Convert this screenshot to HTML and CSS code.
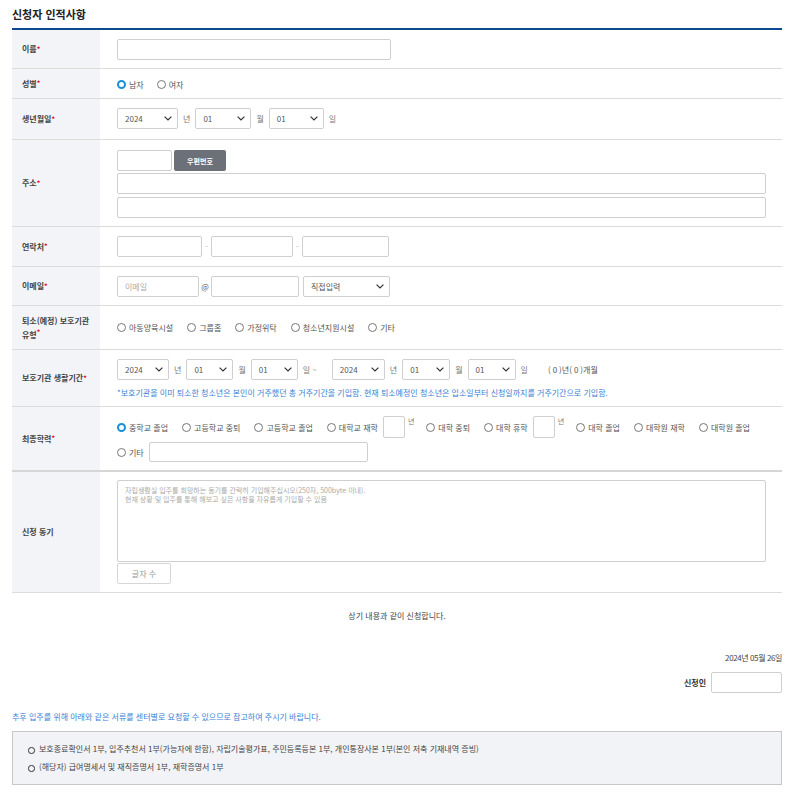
FILE: index.html
```html
<!DOCTYPE html>
<html lang="ko">
<head>
<meta charset="utf-8">
<title>신청자 인적사항</title>
<link rel="stylesheet" href="styles.css">
</head>
<body>
<div class="page">
  <h2 class="title">신청자 인적사항</h2>
  <div class="form">
    <div class="row">
      <div class="label">이름<i class="req">*</i></div>
      <div class="field p-name"><input class="input w274" type="text"></div>
    </div>
    <div class="row">
      <div class="label">성별<i class="req">*</i></div>
      <div class="field p-sex">
        <div class="line gap13">
          <label class="radio"><span class="dot on"></span>남자</label>
          <label class="radio"><span class="dot"></span>여자</label>
        </div>
      </div>
    </div>
    <div class="row">
      <div class="label">생년월일<i class="req">*</i></div>
      <div class="field p-birth">
        <div class="line gap5">
          <div class="select w61"><span>2024</span><svg width="8" height="5" viewBox="0 0 8 5"><path d="M0.6 0.6 L4 4 L7.4 0.6" fill="none" stroke="#333" stroke-width="1.2"/></svg></div>
          <span class="unit">년</span>
          <div class="select w56"><span>01</span><svg width="8" height="5" viewBox="0 0 8 5"><path d="M0.6 0.6 L4 4 L7.4 0.6" fill="none" stroke="#333" stroke-width="1.2"/></svg></div>
          <span class="unit">월</span>
          <div class="select w55"><span>01</span><svg width="8" height="5" viewBox="0 0 8 5"><path d="M0.6 0.6 L4 4 L7.4 0.6" fill="none" stroke="#333" stroke-width="1.2"/></svg></div>
          <span class="unit">일</span>
        </div>
      </div>
    </div>
    <div class="row">
      <div class="label">주소<i class="req">*</i></div>
      <div class="field p-addr">
        <div class="line gap2">
          <input class="input w54" type="text">
          <button class="zip" type="button">우편번호</button>
        </div>
        <input class="input full" type="text">
        <input class="input full" type="text">
      </div>
    </div>
    <div class="row">
      <div class="label">연락처<i class="req">*</i></div>
      <div class="field p-tel">
        <div class="line">
          <input class="input w85" type="text"><span class="dash">-</span>
          <input class="input w82" type="text"><span class="dash">-</span>
          <input class="input w87" type="text">
        </div>
      </div>
    </div>
    <div class="row">
      <div class="label">이메일<i class="req">*</i></div>
      <div class="field p-mail">
        <div class="line">
          <input class="input w82" type="text" placeholder="이메일"><span class="at">@</span>
          <input class="input w88" type="text">
          <div class="select w87 ml4"><span>직접입력</span><svg width="8" height="5" viewBox="0 0 8 5"><path d="M0.6 0.6 L4 4 L7.4 0.6" fill="none" stroke="#333" stroke-width="1.2"/></svg></div>
        </div>
      </div>
    </div>
    <div class="row">
      <div class="label two">퇴소(예정) 보호기관<br>유형<i class="req">*</i></div>
      <div class="field p-type">
        <div class="line gap14">
          <label class="radio"><span class="dot"></span>아동양육시설</label>
          <label class="radio"><span class="dot"></span>그룹홈</label>
          <label class="radio"><span class="dot"></span>가정위탁</label>
          <label class="radio"><span class="dot"></span>청소년지원시설</label>
          <label class="radio"><span class="dot"></span>기타</label>
        </div>
      </div>
    </div>
    <div class="row">
      <div class="label">보호기관 생활기간<i class="req">*</i></div>
      <div class="field p-period">
        <div class="line gap5">
          <div class="select w52"><span>2024</span><svg width="8" height="5" viewBox="0 0 8 5"><path d="M0.6 0.6 L4 4 L7.4 0.6" fill="none" stroke="#333" stroke-width="1.2"/></svg></div>
          <span class="unit">년</span>
          <div class="select w47"><span>01</span><svg width="8" height="5" viewBox="0 0 8 5"><path d="M0.6 0.6 L4 4 L7.4 0.6" fill="none" stroke="#333" stroke-width="1.2"/></svg></div>
          <span class="unit">월</span>
          <div class="select w47"><span>01</span><svg width="8" height="5" viewBox="0 0 8 5"><path d="M0.6 0.6 L4 4 L7.4 0.6" fill="none" stroke="#333" stroke-width="1.2"/></svg></div>
          <span class="unit">일 ~</span>
          <div class="select w53 ml10"><span>2024</span><svg width="8" height="5" viewBox="0 0 8 5"><path d="M0.6 0.6 L4 4 L7.4 0.6" fill="none" stroke="#333" stroke-width="1.2"/></svg></div>
          <span class="unit">년</span>
          <div class="select w48"><span>01</span><svg width="8" height="5" viewBox="0 0 8 5"><path d="M0.6 0.6 L4 4 L7.4 0.6" fill="none" stroke="#333" stroke-width="1.2"/></svg></div>
          <span class="unit">월</span>
          <div class="select w48"><span>01</span><svg width="8" height="5" viewBox="0 0 8 5"><path d="M0.6 0.6 L4 4 L7.4 0.6" fill="none" stroke="#333" stroke-width="1.2"/></svg></div>
          <span class="unit">일</span>
          <span class="calc">(<span class="num">0</span>)년(<span class="num">0</span>)개월</span>
        </div>
        <p class="note">*보호기관을 이미 퇴소한 청소년은 본인이 거주했던 총 거주기간을 기입함. 현재 퇴소예정인 청소년은 입소일부터 신청일까지를 거주기간으로 기입함.</p>
      </div>
    </div>
    <div class="row thick">
      <div class="label">최종학력<i class="req">*</i></div>
      <div class="field p-edu">
        <div class="line gap14">
          <label class="radio"><span class="dot on"></span>중학교 졸업</label>
          <label class="radio"><span class="dot"></span>고등학교 중퇴</label>
          <label class="radio"><span class="dot"></span>고등학교 졸업</label>
          <span class="grp"><label class="radio"><span class="dot"></span>대학교 재학</label><input class="input yr" type="text"><span class="sup">년</span></span>
          <label class="radio"><span class="dot"></span>대학 중퇴</label>
          <span class="grp"><label class="radio"><span class="dot"></span>대학 휴학</label><input class="input yr" type="text"><span class="sup">년</span></span>
          <label class="radio"><span class="dot"></span>대학 졸업</label>
          <label class="radio"><span class="dot"></span>대학원 재학</label>
          <label class="radio"><span class="dot"></span>대학원 졸업</label>
        </div>
        <div class="line gap5 mt4">
          <label class="radio"><span class="dot"></span>기타</label>
          <input class="input w219 h20" type="text">
        </div>
      </div>
    </div>
    <div class="row">
      <div class="label">신청 동기</div>
      <div class="field p-motive">
        <textarea class="textarea" placeholder="자립생활실 입주를 희망하는 동기를 간략히 기입해주십시오(250자, 500byte 이내).&#10;현재 상황 및 입주를 통해 해보고 싶은 사항을 자유롭게 기입할 수 있음"></textarea>
        <button class="count" type="button">글자 수</button>
      </div>
    </div>
  </div>

  <p class="confirm">상기 내용과 같이 신청합니다.</p>
  <p class="date">2024년 05월 26일</p>
  <div class="sign"><span class="sign-label">신청인</span><input class="input w71" type="text"></div>

  <p class="info">추후 입주를 위해 아래와 같은 서류를 센터별로 요청할 수 있으므로 참고하여 주시기 바랍니다.</p>
  <ul class="docs">
    <li>보호종료확인서 1부, 입주추천서 1부(가능자에 한함), 자립기술평가표, 주민등록등본 1부, 개인통장사본 1부(본인 저축 기재내역 증빙)</li>
    <li>(해당자) 급여명세서 및 재직증명서 1부, 재학증명서 1부</li>
  </ul>
</div>
</body>
</html>
```

FILE: styles.css
```css
* { box-sizing: border-box; }

body {
  margin: 0;
  background: #fff;
  color: #333;
  font-family: "Noto Sans CJK KR", "Noto Sans", sans-serif;
  font-size: 8px;
  line-height: 13px;
}

.page {
  width: 792px;
  padding: 0 10px 0 12px;
}

.title {
  margin: 0;
  height: 28px;
  line-height: 28px;
  font-size: 11px;
  font-weight: 700;
  color: #222;
}

.form {
  border-top: 2px solid #0c4a8e;
}

.row {
  display: flex;
  border-bottom: 1px solid #dcdcdc;
}

.row.thick {
  border-bottom: 2px solid #d6d6d6;
}

.label {
  width: 88px;
  flex: none;
  display: flex;
  align-items: center;
  padding: 0 8px 0 10px;
  background: #f3f4f8;
  font-size: 8px;
  font-weight: 700;
  color: #444;
  line-height: 14px;
}

.label.two {
  display: block;
  padding-top: 8px;
  padding-bottom: 7px;
}

.req {
  font-style: normal;
  color: #e3001b;
  font-size: 7px;
  line-height: 7px;
  vertical-align: 3px;
}

.field {
  flex: 1;
  display: flex;
  flex-direction: column;
  padding: 9px 16px 9px 17px;
  min-width: 0;
}

.p-name { padding-top: 9px; padding-bottom: 8px; }
.p-sex { padding-top: 9px; padding-bottom: 7px; justify-content: center; }
.p-birth { padding-top: 9px; padding-bottom: 10px; }
.p-addr { padding-top: 10px; padding-bottom: 8px; gap: 2px; }
.p-tel { padding-top: 9px; padding-bottom: 9px; }
.p-mail { padding-top: 9px; padding-bottom: 8px; }
.p-type { justify-content: center; }
.p-period { padding-top: 9px; padding-bottom: 7px; }
.p-edu { padding-top: 9px; padding-bottom: 8px; }
.p-motive { padding-top: 8px; padding-bottom: 8px; }

.line {
  display: flex;
  align-items: center;
}

.gap2 { gap: 2px; }
.gap5 { gap: 5px; }
.gap13 { gap: 13px; }
.gap14 { gap: 14px; }

.input {
  display: block;
  flex: none;
  height: 21px;
  margin: 0;
  padding: 0 7px;
  border: 1px solid #cfcfcf;
  border-radius: 2px;
  background: #fff;
  font-family: inherit;
  font-size: 8px;
  color: #555;
  outline: none;
}

.input::placeholder { color: #aaa; }

.p-addr .input:last-child { margin-top: 1px; }

.full { width: 100%; }
.w54 { width: 55px; }
.w71 { width: 71px; }
.w82 { width: 82px; }
.w85 { width: 85px; }
.w87 { width: 87px; }
.w88 { width: 88px; }
.w219 { width: 219px; }
.w274 { width: 274px; }
.h20 { height: 20px; }

.mt4 { margin-top: 4px; }
.ml4 { margin-left: 4px; }
.ml10 { margin-left: 10px; }

.zip {
  height: 21px;
  width: 52px;
  margin: 0;
  padding: 0;
  border: none;
  border-radius: 2px;
  background: #6c7079;
  color: #fff;
  font-family: inherit;
  font-size: 7px;
  font-weight: 700;
}

.select {
  display: flex;
  flex: none;
  align-items: center;
  justify-content: space-between;
  height: 21px;
  padding: 0 5px 0 7px;
  border: 1px solid #cfcfcf;
  border-radius: 2px;
  background: #fff;
  color: #555;
  font-size: 8px;
}

.select svg { display: block; flex: none; }

.w47 { width: 47px; }
.w48 { width: 48px; }
.w52 { width: 52px; }
.w53 { width: 53px; }
.w55 { width: 55px; }
.w56 { width: 56px; }
.w61 { width: 61px; }

.unit { color: #777; white-space: nowrap; }

.dash {
  width: 9px;
  text-align: center;
  color: #bbb;
}

.at {
  width: 12px;
  text-align: center;
  color: #555;
}

.calc {
  margin-left: 15px;
  color: #555;
  white-space: nowrap;
}

.num { padding: 0 2px; }

.note {
  margin: 6px 0 0;
  color: #3a7fd5;
  font-size: 8px;
  line-height: 13px;
  white-space: nowrap;
}

.radio {
  display: inline-flex;
  align-items: center;
  gap: 3px;
  color: #555;
  white-space: nowrap;
}

.dot {
  width: 9px;
  height: 9px;
  border: 1px solid #777;
  border-radius: 50%;
  background: #fff;
  flex: none;
}

.dot.on {
  border: 2.5px solid #1a8fd8;
}

.grp {
  display: inline-flex;
  align-items: center;
  gap: 5px;
}

.yr {
  width: 22px;
  height: 22px;
  padding: 0;
}

.sup {
  align-self: flex-start;
  margin-left: -2px;
  margin-right: -2px;
  margin-top: 1px;
  font-size: 7px;
  line-height: 9px;
  color: #777;
}

.textarea {
  display: block;
  width: 100%;
  height: 82px;
  margin: 0;
  padding: 5px 7px;
  border: 1px solid #cfcfcf;
  border-radius: 2px;
  resize: none;
  font-family: inherit;
  font-size: 7px;
  line-height: 9px;
  color: #555;
  outline: none;
}

.textarea::placeholder { color: #aaa; }

.count {
  width: 54px;
  height: 21px;
  margin: 1px 0 0;
  padding: 0;
  border: 1px solid #d6d6d6;
  border-radius: 2px;
  background: #fff;
  font-family: inherit;
  font-size: 8px;
  color: #999;
}

.confirm {
  margin: 16px 0 0;
  text-align: center;
  color: #444;
  line-height: 14px;
}

.date {
  margin: 28px 0 0;
  text-align: right;
  color: #444;
  line-height: 14px;
  letter-spacing: -0.4px;
}

.sign {
  display: flex;
  justify-content: flex-end;
  align-items: center;
  gap: 5px;
  margin-top: 7px;
}

.sign-label {
  font-weight: 700;
  color: #333;
}

.info {
  margin: 17px 0 0;
  color: #3a7fd5;
  line-height: 14px;
}

.docs {
  margin: 7px 0 0;
  padding: 8px 0 8px 26px;
  list-style: none;
  border: 1px solid #c8c8c8;
  background: #f2f3f7;
  color: #444;
}

.docs li {
  position: relative;
  line-height: 18px;
}

.docs li::before {
  content: "";
  position: absolute;
  left: -11px;
  top: 7px;
  width: 4.5px;
  height: 4.5px;
  border: 1.3px solid #333;
  border-radius: 50%;
}
```
